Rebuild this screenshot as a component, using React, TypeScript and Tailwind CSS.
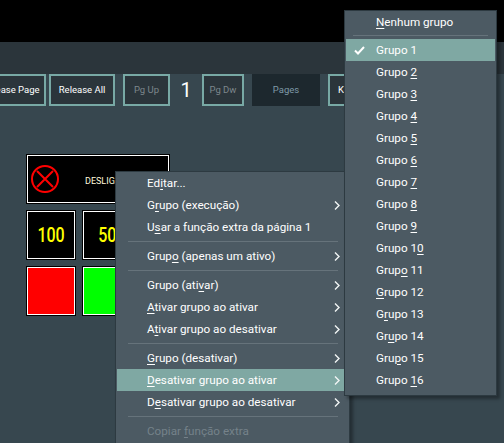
import type { ReactNode } from 'react';

const FONT = 'font-["Roboto","Noto_Sans",sans-serif]';

type Entry = { before: string; key?: string; after?: string; arrow?: boolean; active?: boolean; off?: boolean } | 'sep';

const MAIN_MENU: Entry[] = [
  { before: 'Ed', key: 'i', after: 'tar...' },
  { before: 'G', key: 'r', after: 'upo (execução)', arrow: true },
  { before: 'U', key: 's', after: 'ar a função extra da página 1' },
  'sep',
  { before: 'Grup', key: 'o', after: ' (apenas um ativo)', arrow: true },
  'sep',
  { before: 'Grupo (ati', key: 'v', after: 'ar)', arrow: true },
  { before: '', key: 'A', after: 'tivar grupo ao ativar', arrow: true },
  { before: 'A', key: 't', after: 'ivar grupo ao desativar', arrow: true },
  'sep',
  { before: '', key: 'G', after: 'rupo (desativar)', arrow: true },
  { before: '', key: 'D', after: 'esativar grupo ao ativar', arrow: true, active: true },
  { before: 'D', key: 'e', after: 'sativar grupo ao desativar', arrow: true },
  'sep',
  { before: 'Copiar ', key: 'f', after: 'unção extra', off: true },
];

const GROUPS: [string, string, string][] = [
  ['Grupo ', '2', ''],
  ['Grupo ', '3', ''],
  ['Grupo ', '4', ''],
  ['Grupo ', '5', ''],
  ['Grupo ', '6', ''],
  ['Grupo ', '7', ''],
  ['Grupo ', '8', ''],
  ['Grupo ', '9', ''],
  ['Grupo 1', '0', ''],
  ['Grup', 'o', ' 11'],
  ['', 'G', 'rupo 12'],
  ['G', 'r', 'upo 13'],
  ['Gr', 'u', 'po 14'],
  ['Gru', 'p', 'o 15'],
  ['Grupo ', '1', '6'],
];

function Chevron() {
  return (
    <svg width="6" height="9" viewBox="0 0 6 9" className="shrink-0">
      <path d="M1 0.5 L5 4.5 L1 8.5" fill="none" stroke="#f2f5f5" strokeWidth="1.4" />
    </svg>
  );
}

function Label({ before, k, after }: { before: string; k?: string; after?: string }) {
  return (
    <span className="whitespace-pre pt-px">
      {before}
      {k && <span className="underline underline-offset-2 decoration-1">{k}</span>}
      {after}
    </span>
  );
}

function ToolButton({ className, children }: { className: string; children: ReactNode }) {
  return <div className={`h-8 shrink-0 flex items-center justify-center ${className}`}>{children}</div>;
}

function Tile({ className, children }: { className: string; children?: ReactNode }) {
  return (
    <div className="border border-black">
      <div className={`border border-white h-[48px] ${className}`}>{children}</div>
    </div>
  );
}

export default function App() {
  return (
    <div className={`relative w-[504px] h-[443px] overflow-hidden bg-[#37474f] text-white ${FONT}`}>
      <div className="h-[42px] bg-black" />
      <div className="h-8 bg-[#2b353b]" />

      <div className="flex items-center w-[504px] overflow-hidden text-[9.5px]">
        <ToolButton className="w-[70px] -ml-[24px] border-2 border-[#78a9a5] bg-[#2b353b]">Release Page</ToolButton>
        <ToolButton className="w-[66px] ml-[3px] border-2 border-[#78a9a5] bg-[#2b353b]">Release All</ToolButton>
        <ToolButton className="w-[47px] ml-2 border-2 border-[#78a9a5] bg-[#2b353b] text-[#7d878c]">Pg Up</ToolButton>
        <ToolButton className="w-8 text-xl">1</ToolButton>
        <ToolButton className="w-[42px] border-2 border-[#78a9a5] bg-[#2b353b] text-[#7d878c]">Pg Dw</ToolButton>
        <ToolButton className="w-[68px] ml-2 bg-[#1d282e] text-[#7f9aa8]">Pages</ToolButton>
        <ToolButton className="w-[60px] ml-2 border-2 border-[#78a9a5] bg-[#2b353b] justify-start pl-2">Ki</ToolButton>
      </div>

      <div className="ml-[26px] mt-[48px] flex flex-col gap-[6px] w-[144px]">
        <Tile className="bg-black flex items-center pl-[2px]">
          <svg width="30" height="30" viewBox="0 0 30 30" className="shrink-0">
            <circle cx="15" cy="15" r="13" fill="none" stroke="#ff0000" strokeWidth="2" />
            <path d="M7 7 L23 23 M23 7 L7 23" stroke="#ff0000" strokeWidth="2" />
          </svg>
          <span className="ml-[25px] mt-[6px] text-[9px] whitespace-nowrap text-[#fff8dc]">DESLIGAR</span>
        </Tile>
        <div className="flex gap-[6px]">
          <div className="w-[50px]">
            <Tile className="bg-black flex items-center justify-center">
              <span className="text-[20px] font-medium text-[#ffff00] inline-block scale-x-80">100</span>
            </Tile>
          </div>
          <div className="w-[86px]">
            <Tile className="bg-black flex items-center pl-[12px]">
              <span className="text-[20px] font-medium text-[#ffff00] inline-block scale-x-80">50</span>
            </Tile>
          </div>
        </div>
        <div className="flex gap-[6px]">
          <div className="w-[50px]">
            <Tile className="bg-[#ff0000]" />
          </div>
          <div className="w-[86px]">
            <Tile className="bg-[#00ff00]" />
          </div>
        </div>
      </div>

      {/* context menu */}
      <div className="absolute left-[115px] top-[171px] w-[235px] h-[290px] bg-[#4c5a63] border border-[#2d3a41] pl-px text-[11.7px] shadow-[3px_3px_3px_rgba(0,0,0,0.35)]">
        {MAIN_MENU.map((item, i) =>
          item === 'sep' ? (
            <div key={i} className="h-[7px] pt-[3px] pl-[11px] pr-[11px]">
              <div className="h-px bg-[#66737b]" />
            </div>
          ) : (
            <div
              key={i}
              className={`h-[22px] flex items-center justify-between pl-[30px] pr-[9px] ${item.active ? 'bg-[#7fa8a3]' : ''} ${item.off ? 'text-[#75828a]' : ''}`}
            >
              <Label before={item.before} k={item.key} after={item.after} />
              {item.arrow && <Chevron />}
            </div>
          ),
        )}
      </div>

      {/* group submenu */}
      <div className="absolute left-[344px] top-[10px] w-[153px] h-[386px] bg-[#4c5a63] border border-[#2d3a41] px-px text-[11.7px] shadow-[3px_3px_3px_rgba(0,0,0,0.35)]">
        <div className="h-[22px] flex items-center pl-[30px]">
          <Label before="" k="N" after="enhum grupo" />
        </div>
        <div className="h-[6px] pt-[2px] px-[7px]">
          <div className="h-px bg-[#66737b]" />
        </div>
        <div className="h-[22px] flex items-center bg-[#7fa8a3]">
          <svg width="11" height="9" viewBox="0 0 11 9" className="ml-2 mr-[11px] shrink-0">
            <path d="M1 4.5 L4 7.5 L10 1" fill="none" stroke="#ffffff" strokeWidth="2" />
          </svg>
          <span className="pt-px">Grupo 1</span>
        </div>
        {GROUPS.map(([a, k, b]) => (
          <div key={a + k + b} className="h-[22px] flex items-center pl-[30px]">
            <Label before={a} k={k} after={b} />
          </div>
        ))}
      </div>
    </div>
  );
}
